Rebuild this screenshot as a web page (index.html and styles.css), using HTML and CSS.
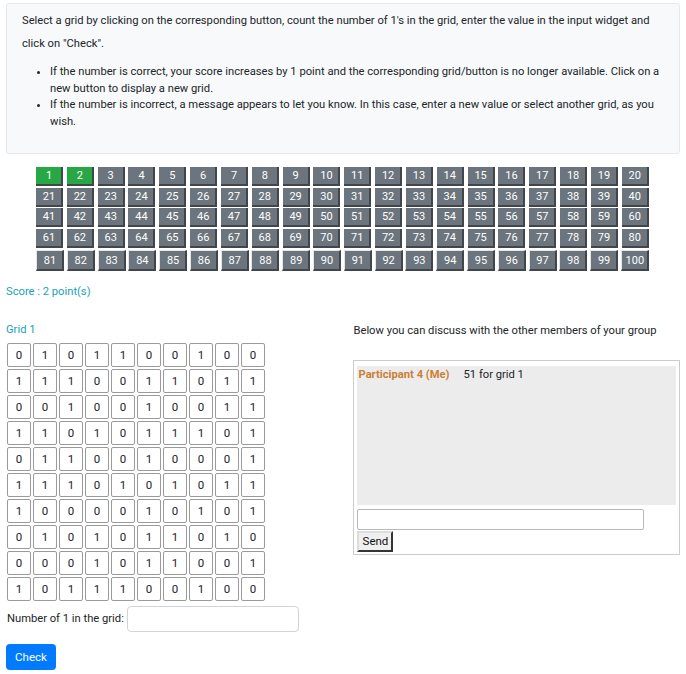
FILE: index.html
```html
<!DOCTYPE html>
<html>
<head>
<meta charset="utf-8">
<link rel="stylesheet" href="styles.css">
</head>
<body>
<div class="intro">
  <p>Select a grid by clicking on the corresponding button, count the number of 1's in the grid, enter the value in the input widget and click on "Check".</p>
  <ul>
    <li>If the number is correct, your score increases by 1 point and the corresponding grid/button is no longer available. Click on a new button to display a new grid.</li>
    <li>If the number is incorrect, a message appears to let you know. In this case, enter a new value or select another grid, as you wish.</li>
  </ul>
</div>

<div class="buttons">
  <div class="brow">
    <span class="gb done">1</span><span class="gb done">2</span><span class="gb">3</span><span class="gb">4</span><span class="gb">5</span><span class="gb">6</span><span class="gb">7</span><span class="gb">8</span><span class="gb">9</span><span class="gb">10</span><span class="gb">11</span><span class="gb">12</span><span class="gb">13</span><span class="gb">14</span><span class="gb">15</span><span class="gb">16</span><span class="gb">17</span><span class="gb">18</span><span class="gb">19</span><span class="gb">20</span>
  </div>
  <div class="brow">
    <span class="gb">21</span><span class="gb">22</span><span class="gb">23</span><span class="gb">24</span><span class="gb">25</span><span class="gb">26</span><span class="gb">27</span><span class="gb">28</span><span class="gb">29</span><span class="gb">30</span><span class="gb">31</span><span class="gb">32</span><span class="gb">33</span><span class="gb">34</span><span class="gb">35</span><span class="gb">36</span><span class="gb">37</span><span class="gb">38</span><span class="gb">39</span><span class="gb">40</span>
  </div>
  <div class="brow">
    <span class="gb">41</span><span class="gb">42</span><span class="gb">43</span><span class="gb">44</span><span class="gb">45</span><span class="gb">46</span><span class="gb">47</span><span class="gb">48</span><span class="gb">49</span><span class="gb">50</span><span class="gb">51</span><span class="gb">52</span><span class="gb">53</span><span class="gb">54</span><span class="gb">55</span><span class="gb">56</span><span class="gb">57</span><span class="gb">58</span><span class="gb">59</span><span class="gb">60</span>
  </div>
  <div class="brow">
    <span class="gb">61</span><span class="gb">62</span><span class="gb">63</span><span class="gb">64</span><span class="gb">65</span><span class="gb">66</span><span class="gb">67</span><span class="gb">68</span><span class="gb">69</span><span class="gb">70</span><span class="gb">71</span><span class="gb">72</span><span class="gb">73</span><span class="gb">74</span><span class="gb">75</span><span class="gb">76</span><span class="gb">77</span><span class="gb">78</span><span class="gb">79</span><span class="gb">80</span>
  </div>
  <div class="brow last">
    <span class="gb">81</span><span class="gb">82</span><span class="gb">83</span><span class="gb">84</span><span class="gb">85</span><span class="gb">86</span><span class="gb">87</span><span class="gb">88</span><span class="gb">89</span><span class="gb">90</span><span class="gb">91</span><span class="gb">92</span><span class="gb">93</span><span class="gb">94</span><span class="gb">95</span><span class="gb">96</span><span class="gb">97</span><span class="gb">98</span><span class="gb">99</span><span class="gb">100</span>
  </div>
</div>

<div class="score">Score : 2 point(s)</div>

<div class="cols">
  <div class="left">
    <div class="gridtitle">Grid 1</div>
    <div class="grid">
      <span>0</span><span>1</span><span>0</span><span>1</span><span>1</span><span>0</span><span>0</span><span>1</span><span>0</span><span>0</span>
      <span>1</span><span>1</span><span>1</span><span>0</span><span>0</span><span>1</span><span>1</span><span>0</span><span>1</span><span>1</span>
      <span>0</span><span>0</span><span>1</span><span>0</span><span>0</span><span>1</span><span>0</span><span>0</span><span>1</span><span>1</span>
      <span>1</span><span>1</span><span>0</span><span>1</span><span>0</span><span>1</span><span>1</span><span>1</span><span>0</span><span>1</span>
      <span>0</span><span>1</span><span>1</span><span>0</span><span>0</span><span>1</span><span>0</span><span>0</span><span>0</span><span>1</span>
      <span>1</span><span>1</span><span>1</span><span>0</span><span>1</span><span>0</span><span>1</span><span>0</span><span>1</span><span>1</span>
      <span>1</span><span>0</span><span>0</span><span>0</span><span>0</span><span>1</span><span>0</span><span>1</span><span>0</span><span>1</span>
      <span>0</span><span>1</span><span>0</span><span>1</span><span>0</span><span>1</span><span>1</span><span>0</span><span>1</span><span>0</span>
      <span>0</span><span>0</span><span>0</span><span>1</span><span>0</span><span>1</span><span>1</span><span>0</span><span>0</span><span>1</span>
      <span>1</span><span>0</span><span>1</span><span>1</span><span>1</span><span>0</span><span>0</span><span>1</span><span>0</span><span>0</span>
    </div>
    <div class="answer">
      <label>Number of 1 in the grid:</label>
      <input class="ansinput" type="text">
    </div>
    <button class="check">Check</button>
  </div>
  <div class="right">
    <div class="chattitle">Below you can discuss with the other members of your group</div>
    <div class="chat">
      <div class="messages">
        <div class="msg"><span class="who">Participant 4 (Me)</span><span class="txt">51 for grid 1</span></div>
      </div>
      <input class="chatinput" type="text">
      <button class="send">Send</button>
    </div>
  </div>
</div>
</body>
</html>
```
FILE: styles.css
```css
html, body {
  margin: 0;
  padding: 0;
  background: #fff;
}
body {
  font-family: Roboto, "Liberation Sans", sans-serif;
  font-size: 11.2px;
  color: #212529;
  padding: 3px 6px 0 6px;
}
.intro {
  background: #f8f9fa;
  border: 1px solid #e6e8ea;
  border-radius: 3px;
  padding: 5px 8px 0 15px;
  height: 151px;
  box-sizing: border-box;
}
.intro p {
  margin: 0 0 9px 0;
  line-height: 23px;
}
.intro ul {
  margin: 0;
  padding-left: 28px;
  line-height: 16.5px;
}
.buttons {
  margin: 13px 0 0 30px;
  width: 613px;
  display: flex;
  flex-direction: column;
  gap: 1.5px;
}
.brow {
  display: flex;
  justify-content: space-between;
}
.gb {
  width: 27px;
  height: 19px;
  box-sizing: border-box;
  background: #6c757d;
  color: #fff;
  font-size: 11px;
  line-height: 18px;
  text-align: center;
  border-right: 2px solid #40464c;
  border-bottom: 2px solid #40464c;
  padding-left: 1px;
}
.gb.done {
  background: #28a745;
}
.last {
  margin-top: 0.5px;
}
.last .gb {
  height: 21px;
  line-height: 20px;
  border-left: 1px solid #e3e5e7;
  border-top: 1px solid #e3e5e7;
  width: 28px;
  margin-left: -1px;
}
.last .gb:first-child {
  margin-left: 0;
}
.score {
  color: #17a2b8;
  margin-top: 13px;
  height: 16px;
  line-height: 16px;
}
.cols {
  display: flex;
  margin-top: 22px;
}
.left {
  width: 348px;
}
.right {
  width: 327px;
}
.gridtitle {
  color: #17a2b8;
  line-height: 16px;
  margin-bottom: 5px;
}
.grid {
  display: grid;
  grid-template-columns: repeat(10, 24px);
  grid-auto-rows: 24px;
  gap: 2px;
  margin-left: 1px;
}
.grid span {
  border: 1px solid #9a9a9a;
  border-radius: 2px;
  display: flex;
  align-items: center;
  justify-content: center;
  font-size: 11.5px;
}
.answer {
  display: flex;
  align-items: center;
  margin-top: 5px;
  gap: 3px;
}
.answer label {
  margin-left: 1px;
}
.ansinput {
  width: 172px;
  height: 26px;
  box-sizing: border-box;
  border: 1px solid #ced4da;
  border-radius: 4px;
  margin: 0;
}
.check {
  margin-top: 12px;
  background: #007bff;
  color: #fff;
  border: none;
  border-radius: 4px;
  width: 50px;
  height: 26px;
  font-family: Roboto, "Liberation Sans", sans-serif;
  font-size: 11.5px;
  padding: 0;
}
.chattitle {
  line-height: 16px;
  margin-top: 1px;
}
.chat {
  margin-top: 21px;
  border: 1px solid #cccccc;
  padding: 5px 3px 2px 3px;
}
.messages {
  background: #ececec;
  height: 139px;
  padding: 1px 1px;
  box-sizing: border-box;
  line-height: 16px;
}
.who {
  color: #cd7f32;
  font-weight: bold;
  margin-right: 14px;
}
.chatinput {
  display: block;
  margin: 4px 0 0 0;
  width: 287px;
  height: 21px;
  box-sizing: border-box;
  border: 1px solid #b8b8b8;
  border-radius: 2px;
}
.send {
  display: block;
  margin: 1px 0 0 0;
  height: 21px;
  width: 36px;
  padding: 0;
  background: #efefef;
  border: 2px outset #888;
  border-top-color: #ddd;
  border-left-color: #ddd;
  font-family: Roboto, "Liberation Sans", sans-serif;
  font-size: 11.5px;
  color: #111;
}
```
